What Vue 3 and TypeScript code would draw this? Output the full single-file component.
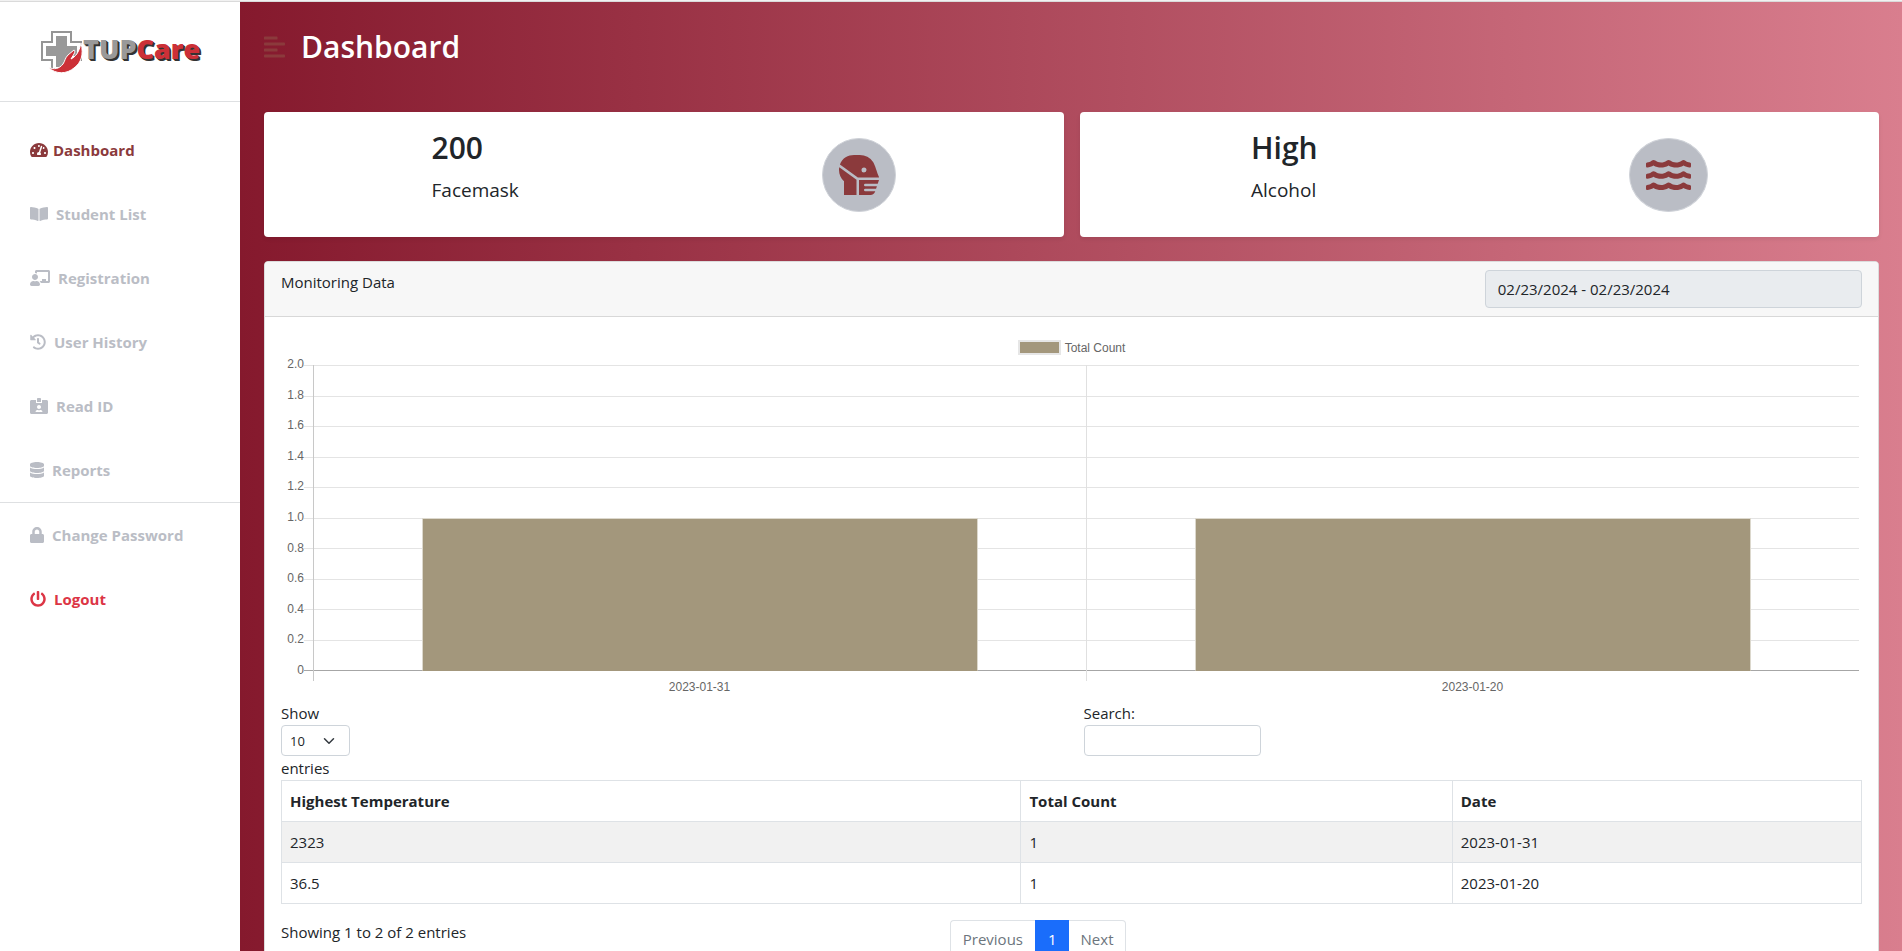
<script setup lang="ts">
import { ref } from 'vue'

interface NavItem {
  label: string
  width: number
  path: string
  state?: 'active' | 'danger'
}

interface CountRow {
  temperature: string
  count: number
  date: string
}

const mainLinks: NavItem[] = [
  {
    label: 'Dashboard',
    width: 576,
    state: 'active',
    path: 'M288 32C128.94 32 0 160.94 0 320c0 52.8 14.25 102.26 39.06 144.8 5.61 9.62 16.3 15.2 27.44 15.2h443c11.14 0 21.83-5.58 27.44-15.2C561.75 422.26 576 372.8 576 320c0-159.06-128.94-288-288-288zm0 64c14.71 0 26.58 10.13 30.32 23.65-1.11 2.26-2.64 4.23-3.45 6.67l-9.22 27.67c-5.13 3.49-10.97 6.01-17.64 6.01-17.67 0-32-14.33-32-32S270.33 96 288 96zM96 384c-17.67 0-32-14.33-32-32s14.33-32 32-32 32 14.33 32 32-14.33 32-32 32zm48-160c-17.67 0-32-14.33-32-32s14.33-32 32-32 32 14.33 32 32-14.33 32-32 32zm246.77-72.41l-61.33 184C343.13 347.33 352 364.54 352 384c0 11.72-3.38 22.55-8.88 32H232.88c-5.5-9.45-8.88-20.28-8.88-32 0-33.94 26.5-61.43 59.9-63.59l61.34-184.01c4.17-12.56 17.73-19.45 30.36-15.17 12.57 4.19 19.35 17.79 15.17 30.36zm14.66 57.2l15.52-46.55c3.47-1.29 7.13-2.23 11.05-2.23 17.67 0 32 14.33 32 32s-14.33 32-32 32c-11.38-.01-21.25-6.1-26.57-15.22zM480 384c-17.67 0-32-14.33-32-32s14.33-32 32-32 32 14.33 32 32-14.33 32-32 32z',
  },
  {
    label: 'Student List',
    width: 576,
    path: 'M542.22 32.05c-54.8 3.11-163.72 14.43-230.96 55.59-4.64 2.84-7.27 7.89-7.27 13.17v363.87c0 11.55 12.63 18.85 23.28 13.49 69.18-34.82 169.23-44.32 218.7-46.92 16.89-.89 30.02-14.43 30.02-30.66V62.75c.01-17.71-15.35-31.74-33.77-30.7zM264.73 87.64C197.5 46.48 88.58 35.17 33.78 32.05 15.36 31.01 0 45.04 0 62.75V400.6c0 16.24 13.13 29.78 30.02 30.66 49.49 2.6 149.59 12.11 218.77 46.95 10.62 5.35 23.21-1.94 23.21-13.46V100.63c0-5.29-2.62-10.14-7.27-12.99z',
  },
  {
    label: 'Registration',
    width: 640,
    path: 'M208 352c-2.39 0-4.78.35-7.06 1.09C187.98 357.3 174.35 360 160 360c-14.35 0-27.98-2.7-40.95-6.91-2.28-.74-4.66-1.09-7.05-1.09C49.94 352-.33 402.48 0 464.62.14 490.88 21.73 512 48 512h224c26.27 0 47.86-21.12 48-47.38.33-62.14-49.94-112.62-112-112.62zm-48-32c53.02 0 96-42.98 96-96s-42.98-96-96-96-96 42.98-96 96 42.98 96 96 96zM592 0H208c-26.47 0-48 22.25-48 49.59V96c23.42 0 45.1 6.78 64 17.8V64h352v288h-64v-64H384v64h-76.24c19.1 16.69 33.12 38.73 39.69 64H592c26.47 0 48-22.25 48-49.59V49.59C640 22.25 618.47 0 592 0z',
  },
  {
    label: 'User History',
    width: 512,
    path: 'M504 255.531c.253 136.64-111.18 248.372-247.82 248.468-59.015.042-113.223-20.53-155.822-54.911-11.077-8.94-11.905-25.541-1.839-35.607l11.267-11.267c8.609-8.609 22.353-9.551 31.891-1.984C173.062 425.135 212.781 440 256 440c101.705 0 184-82.311 184-184 0-101.705-82.311-184-184-184-48.814 0-93.149 18.969-126.068 49.932l50.754 50.754c10.08 10.08 2.941 27.314-11.313 27.314H24c-8.837 0-16-7.163-16-16V38.627c0-14.254 17.234-21.393 27.314-11.314l49.372 49.372C129.209 34.136 189.552 8 256 8c136.81 0 247.747 110.78 248 247.531zm-180.912 78.784l9.823-12.63c8.138-10.463 6.253-25.542-4.21-33.679L288 256.349V152c0-13.255-10.745-24-24-24h-16c-13.255 0-24 10.745-24 24v135.651l65.409 50.874c10.463 8.137 25.541 6.253 33.679-4.21z',
  },
  {
    label: 'Read ID',
    width: 576,
    path: 'M528 64H384v96H192V64H48C21.5 64 0 85.5 0 112v352c0 26.5 21.5 48 48 48h480c26.5 0 48-21.5 48-48V112c0-26.5-21.5-48-48-48zM288 224c35.3 0 64 28.7 64 64s-28.7 64-64 64-64-28.7-64-64 28.7-64 64-64zm93.3 224H194.7c-10.4 0-18.8-10-15.6-19.8 8.3-25.6 32.4-44.2 60.9-44.2h8.2c12.3 5.1 25.7 8 39.8 8s27.6-2.9 39.8-8h8.2c28.4 0 52.5 18.5 60.9 44.2 3.2 9.9-5.2 19.8-15.6 19.8zM352 32c0-17.7-14.3-32-32-32h-64c-17.7 0-32 14.3-32 32v96h128V32z',
  },
  {
    label: 'Reports',
    width: 448,
    path: 'M448 73.143v45.714C448 159.143 347.667 192 224 192S0 159.143 0 118.857V73.143C0 32.857 100.333 0 224 0s224 32.857 224 73.143zM448 176v102.857C448 319.143 347.667 352 224 352S0 319.143 0 278.857V176c48.125 33.143 136.208 48.572 224 48.572S399.874 209.143 448 176zm0 160v102.857C448 479.143 347.667 512 224 512S0 479.143 0 438.857V336c48.125 33.143 136.208 48.572 224 48.572S399.874 369.143 448 336z',
  },
]

const accountLinks: NavItem[] = [
  {
    label: 'Change Password',
    width: 448,
    path: 'M400 224h-24v-72C376 68.2 307.8 0 224 0S72 68.2 72 152v72H48c-26.5 0-48 21.5-48 48v192c0 26.5 21.5 48 48 48h352c26.5 0 48-21.5 48-48V272c0-26.5-21.5-48-48-48zm-104 0H152v-72c0-39.7 32.3-72 72-72s72 32.3 72 72v72z',
  },
  {
    label: 'Logout',
    width: 512,
    state: 'danger',
    path: 'M400 54.1c63 45 104 118.6 104 201.9 0 136.8-110.8 247.7-247.5 248C120 504.3 8.2 393 8 256.4 7.9 173.1 48.9 99.3 111.8 54.2c11.7-8.3 28-4.8 35 7.7L162.6 90c5.9 10.5 3.1 23.8-6.6 31-41.5 30.8-68 79.6-68 134.9-.1 92.3 74.5 168.1 168 168.1 91.6 0 168.6-74.2 168-169.1-.3-51.8-24.7-101.8-68.1-134-9.7-7.2-12.4-20.5-6.5-30.9l15.8-28.1c7-12.4 23.2-16.1 34.8-7.8zM296 264V24c0-13.3-10.7-24-24-24h-32c-13.3 0-24 10.7-24 24v240c0 13.3 10.7 24 24 24h32c13.3 0 24-10.7 24-24z',
  },
]

const navGroups: NavItem[][] = [mainLinks, accountLinks]

const waveOffsets: number[] = [0, -144, -288]

const rows: CountRow[] = [
  { temperature: '2323', count: 1, date: '2023-01-31' },
  { temperature: '36.5', count: 1, date: '2023-01-20' },
]

const axisMax = 2
const axisLabels: string[] = Array.from({ length: 11 }, (_, i) =>
  i === 10 ? '0' : (axisMax - i * 0.2).toFixed(1),
)

const dateRange = ref('02/23/2024 - 02/23/2024')
const pageSize = ref('10')
const search = ref('')
</script>

<template>
  <div class="shell">
    <aside class="sidebar">
      <a class="brand" href="#" aria-label="TUPCare home">
        <svg class="brand-mark" width="42" height="42" viewBox="0 0 42 42" aria-hidden="true">
          <path d="M11 1h19v10h10v18H30v9H11v-9H1V11h10z" fill="#fff" stroke="#959595" stroke-width="2" />
          <path d="M15 5h11v10h10v10H26v11H15V25H5V15h10z" fill="#999" />
          <path
            d="M7 36c6 3 11 2 15-3 2-3 2-6 5-9l6-5c1 0 1 2 0 4l-3 5c4-2 8-6 10-16 3 12 0 20-7 25-7 6-18 7-26-1z"
            fill="#cc3037"
            stroke="#fff"
            stroke-width="1"
          />
        </svg>
        <span class="brand-name">TUP<span class="brand-accent">Care</span></span>
      </a>
      <nav aria-label="Main">
        <ul v-for="(group, g) in navGroups" :key="g" class="nav-group">
          <li v-for="item in group" :key="item.label">
            <a href="#" class="nav-link" :class="item.state">
              <svg
                :width="item.width / 32"
                height="16"
                :viewBox="`0 0 ${item.width} 512`"
                fill="currentColor"
                aria-hidden="true"
              >
                <path :d="item.path" />
              </svg>
              <span>{{ item.label }}</span>
            </a>
          </li>
        </ul>
      </nav>
    </aside>

    <main class="content">
      <header class="page-head">
        <button type="button" class="menu-toggle" aria-label="Toggle sidebar">
          <svg width="21" height="24" viewBox="0 0 448 512" fill="currentColor" aria-hidden="true">
            <path
              d="M12.83 352h262.34A12.82 12.82 0 0 0 288 339.17v-38.34A12.82 12.82 0 0 0 275.17 288H12.83A12.82 12.82 0 0 0 0 300.83v38.34A12.82 12.82 0 0 0 12.83 352zm0-256h262.34A12.82 12.82 0 0 0 288 83.17V44.83A12.82 12.82 0 0 0 275.17 32H12.83A12.82 12.82 0 0 0 0 44.83v38.34A12.82 12.82 0 0 0 12.83 96zM432 160H16a16 16 0 0 0-16 16v32a16 16 0 0 0 16 16h416a16 16 0 0 0 16-16v-32a16 16 0 0 0-16-16zm0 256H16a16 16 0 0 0-16 16v32a16 16 0 0 0 16 16h416a16 16 0 0 0 16-16v-32a16 16 0 0 0-16-16z"
            />
          </svg>
        </button>
        <h1>Dashboard</h1>
      </header>

      <section class="stats" aria-label="Supplies">
        <article class="stat">
          <div>
            <h2>200</h2>
            <p>Facemask</p>
          </div>
          <span class="stat-icon">
            <svg width="40" height="40" viewBox="0 0 512 512" fill="currentColor" aria-hidden="true">
              <path
                d="M.15,184.42C-2.17,244.21,23,298.06,64,334.88V512H224V316.51L3.67,156.25A182.28,182.28,0,0,0,.15,184.42ZM509.22,275c-21-47.12-48.5-151.75-73.12-186.75A208.11,208.11,0,0,0,266.11,0H192C117.2,0,42.42,37.58,11.72,122.42L241.25,288H511.94A31.35,31.35,0,0,0,509.22,275ZM320,224a32,32,0,1,1,32-32A32.07,32.07,0,0,1,320,224Zm16,144H496l16-48H256V512H401.88a64,64,0,0,0,60.71-43.76L464,464H336a16,16,0,0,1,0-32H474.67l10.67-32H336a16,16,0,0,1,0-32Z"
              />
            </svg>
          </span>
        </article>
        <article class="stat">
          <div>
            <h2>High</h2>
            <p>Alcohol</p>
          </div>
          <span class="stat-icon">
            <svg width="45" height="40" viewBox="0 0 576 512" fill="currentColor" aria-hidden="true">
              <path
                v-for="dy in waveOffsets"
                :key="dy"
                :transform="`translate(0 ${dy})`"
                d="M562.1 383.9c-21.5-2.4-42.1-10.5-57.9-22.9-14.1-11.1-34.2-11.3-48.2 0-37.9 30.4-107.2 30.4-145.7-1.5-13.5-11.2-33-9.1-46.7 1.8-38 30.1-106.9 30-145.2-1.7-13.5-11.2-33.3-8.9-47.1 2-15.5 12.2-36 20.1-57.7 22.4-7.9.8-13.6 7.8-13.6 15.7v32.2c0 9.1 7.6 16.8 16.7 16 28.8-2.5 56.1-11.4 79.4-25.9 56.5 34.6 137 34.1 192 0 56.5 34.6 137 34.1 192 0 23.3 14.2 50.9 23.3 79.1 25.8 9.1.8 16.7-6.9 16.7-16v-31.6c.1-8-5.7-15.4-13.8-16.3z"
              />
            </svg>
          </span>
        </article>
      </section>

      <section class="panel">
        <header class="panel-head">
          <label for="date-range">Monitoring Data</label>
          <input id="date-range" v-model="dateRange" class="range" type="text" readonly />
        </header>

        <div class="panel-body">
          <figure class="chart" aria-label="Total count per date">
            <figcaption class="legend"><span class="swatch"></span>Total Count</figcaption>
            <div class="plot">
              <div class="y-labels">
                <span v-for="label in axisLabels" :key="label">{{ label }}</span>
              </div>
              <div class="grid-lines">
                <div v-for="n in 10" :key="n"></div>
              </div>
              <div class="categories">
                <div v-for="row in rows" :key="row.date" class="category">
                  <div class="bar" :style="{ height: `${(row.count / axisMax) * 100}%` }"></div>
                </div>
              </div>
              <div class="x-labels">
                <span v-for="row in rows" :key="row.date">{{ row.date }}</span>
              </div>
            </div>
          </figure>

          <div class="controls">
            <label class="length">
              <span>Show</span>
              <span class="select-wrap">
                <select v-model="pageSize">
                  <option>10</option>
                  <option>25</option>
                  <option>50</option>
                  <option>100</option>
                </select>
                <svg width="12" height="12" viewBox="0 0 16 16" fill="none" aria-hidden="true">
                  <path d="m2 5 6 6 6-6" stroke="#343a40" stroke-width="2" stroke-linecap="round" stroke-linejoin="round" />
                </svg>
              </span>
              <span>entries</span>
            </label>
            <label class="search">
              <span>Search:</span>
              <input v-model="search" type="search" />
            </label>
          </div>

          <table>
            <thead>
              <tr>
                <th scope="col" class="col-temp">Highest Temperature</th>
                <th scope="col" class="col-count">Total Count</th>
                <th scope="col">Date</th>
              </tr>
            </thead>
            <tbody>
              <tr v-for="row in rows" :key="row.date">
                <td>{{ row.temperature }}</td>
                <td>{{ row.count }}</td>
                <td>{{ row.date }}</td>
              </tr>
            </tbody>
          </table>

          <footer class="table-foot">
            <p>Showing 1 to 2 of 2 entries</p>
            <nav class="pager" aria-label="Table pages">
              <button type="button">Previous</button>
              <button type="button" class="current" aria-current="page">1</button>
              <button type="button">Next</button>
            </nav>
          </footer>
        </div>
      </section>
    </main>
  </div>
</template>

<style>
body {
  background: #f1f1f1;
}

#app {
  padding-top: 1px;
}
</style>

<style scoped>
* {
  box-sizing: border-box;
}

.shell {
  display: flex;
  min-height: calc(100vh - 1px);
  border-top: 1px solid #dadada;
  background: #fff;
  color: #212529;
  font-family: 'Open Sans', 'Noto Sans', sans-serif;
  font-size: 15px;
  line-height: 24px;
}

h1,
h2,
p,
ul,
figure {
  margin: 0;
  padding: 0;
}

input,
select,
button {
  font: inherit;
  color: inherit;
}

.sidebar {
  flex: 0 0 240px;
}

.brand {
  display: flex;
  align-items: flex-start;
  height: 100px;
  padding: 29px 0 0 41px;
  border-bottom: 1px solid #dee0e2;
  text-decoration: none;
}

.brand-mark {
  flex: none;
}

.brand-name {
  padding-top: 4px;
  color: #999;
  font-size: 27px;
  font-weight: 800;
  line-height: 28px;
  text-shadow: 1px 1px 0 #333, 2px 2px 0 #333;
}

.brand-accent {
  color: #cc3037;
}

.nav-group {
  list-style: none;
}

.nav-group:first-child {
  padding-top: 16px;
}

.nav-group + .nav-group {
  border-top: 1px solid #dee0e2;
}

.nav-link {
  display: flex;
  align-items: center;
  gap: 8px;
  padding: 20px 30px;
  color: #babdc5;
  font-weight: 700;
  text-decoration: none;
}

.nav-link.active {
  gap: 5px;
  color: #8b3a3c;
}

.nav-link.danger {
  color: #dc3545;
}

.content {
  flex: 1;
  min-width: 0;
  padding: 0 23px 24px 24px;
  background: linear-gradient(to right, #85192d, #d97e8e);
}

.page-head {
  display: flex;
  align-items: center;
  gap: 16px;
  padding: 26px 0 46px;
}

.menu-toggle {
  display: flex;
  padding: 0;
  border: 0;
  background: none;
  color: #8b3a3c;
}

h1 {
  color: #fff;
  font-size: 30px;
  font-weight: 600;
  line-height: 38px;
}

.stats {
  display: grid;
  grid-template-columns: 1fr 1fr;
  gap: 16px;
  margin-bottom: 24px;
}

.stat {
  display: flex;
  align-items: center;
  justify-content: space-around;
  padding: 16px;
  border-radius: 4px;
  background: #fff;
  box-shadow: 0 2px 4px rgba(0, 0, 0, 0.08);
}

.stat h2 {
  margin-bottom: 8px;
  font-size: 30px;
  font-weight: 600;
  line-height: 39px;
}

.stat p {
  margin-bottom: 16px;
  font-size: 19px;
  line-height: 30px;
}

.stat-icon {
  display: flex;
  padding: 16px;
  border: 1px solid #cfd2d8;
  border-radius: 50%;
  background: #babdc5;
  color: #8b3a3c;
}

.panel {
  border: 1px solid #dcdcdc;
  border-radius: 4px;
  background: #fff;
}

.panel-head {
  display: flex;
  align-items: flex-start;
  justify-content: space-between;
  padding: 8px 16px;
  border-bottom: 1px solid #d8d8d8;
  border-radius: 3px 3px 0 0;
  background: #f7f7f7;
}

.range {
  width: calc(25% - 18px);
  height: 38px;
  padding: 6px 12px;
  border: 1px solid #ced4da;
  border-radius: 4px;
  background: #e9ecef;
}

.panel-body {
  padding: 16px;
}

.chart {
  color: #666;
  font-family: 'Liberation Sans', Arial, sans-serif;
  font-size: 12px;
  line-height: 12px;
}

.legend {
  display: flex;
  justify-content: center;
  align-items: center;
  gap: 4px;
  padding: 7px 0 10px;
}

.swatch {
  width: 43px;
  height: 15px;
  border: 2px solid #e6e6e6;
  background: #a3977c;
}

.plot {
  display: grid;
  grid-template-columns: 23px 9px 1fr;
  grid-template-rows: 306px 10px auto;
  padding-right: 3px;
}

.y-labels {
  grid-area: 1 / 1;
  display: flex;
  flex-direction: column;
  justify-content: space-between;
  margin: -7px 0 -5px;
  text-align: right;
}

.grid-lines {
  grid-area: 1 / 2 / 2 / 4;
  display: flex;
  flex-direction: column;
  border-bottom: 1px solid #a6a6a6;
}

.grid-lines div {
  flex: 1;
  border-top: 1px solid #e4e4e4;
}

.categories {
  grid-area: 1 / 3 / 3 / 4;
  display: grid;
  grid-template-columns: 1fr 1fr;
}

.category {
  display: flex;
  align-items: flex-end;
  padding: 0 14% 10px;
  border-left: 1px solid #e0e0e0;
}

.category:first-child {
  border-left-color: #c8c8c8;
}

.bar {
  width: 100%;
  border: 1px solid #dcd8cd;
  border-bottom-color: #a3977c;
  background: #a3977c;
}

.x-labels {
  grid-area: 3 / 3;
  display: grid;
  grid-template-columns: 1fr 1fr;
  padding-bottom: 8px;
  text-align: center;
}

.controls {
  display: grid;
  grid-template-columns: 1fr 1fr;
  gap: 24px;
}

.length,
.search {
  display: flex;
  flex-direction: column;
  align-items: flex-start;
}

.select-wrap {
  display: grid;
  align-items: center;
}

.select-wrap select {
  grid-area: 1 / 1;
  width: 69px;
  height: 31px;
  padding: 0 8px;
  border: 1px solid #ced4da;
  border-radius: 4px;
  background: #fff;
  font-size: 13px;
  appearance: none;
}

.select-wrap svg {
  grid-area: 1 / 1;
  justify-self: end;
  margin-right: 15px;
  pointer-events: none;
}

.search input {
  width: 177px;
  height: 31px;
  padding: 4px 8px;
  border: 1px solid #ced4da;
  border-radius: 4px;
  background: #fff;
  font-size: 13px;
  appearance: none;
}

table {
  width: 100%;
  border-collapse: collapse;
  table-layout: fixed;
}

th,
td {
  padding: 8px;
  border: 1px solid #dee2e6;
  text-align: left;
}

.col-temp {
  width: 46.8%;
}

.col-count {
  width: 27.3%;
}

tbody tr:nth-child(odd) {
  background: #f1f1f1;
}

.table-foot {
  display: grid;
  grid-template-columns: repeat(12, 1fr);
  column-gap: 24px;
  padding-top: 16px;
}

.table-foot p {
  grid-column: span 5;
}

.pager {
  grid-column: span 7;
  display: flex;
}

.pager button {
  height: 38px;
  padding: 6px 12px;
  border: 1px solid #dee2e6;
  border-right-width: 0;
  background: #fff;
  color: #6c757d;
}

.pager button:first-child {
  border-radius: 4px 0 0 4px;
}

.pager button:last-child {
  border-right-width: 1px;
  border-left-width: 0;
  border-radius: 0 4px 4px 0;
}

.pager .current {
  border-color: #1a6dfb;
  background: #1a6dfb;
  color: #fff;
}
</style>
